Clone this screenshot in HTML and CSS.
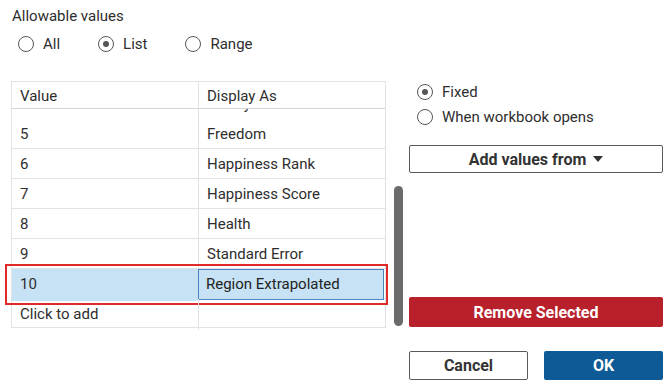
FILE: index.html
```html
<!DOCTYPE html>
<html>
<head>
    <title>Allowable values</title>
    <link rel="stylesheet" href="styles.css">
</head>
<body>
    <div class="dialog">
        <div class="section-title">Allowable values</div>

        <div class="radio-row">
            <div class="radio"><span class="circle"></span>All</div>
            <div class="radio checked"><span class="circle"></span>List</div>
            <div class="radio"><span class="circle"></span>Range</div>
        </div>

        <div class="main">
            <div class="list-panel">
                <div class="table">
                    <div class="row head">
                        <div class="cell">Value</div>
                        <div class="cell">Display As</div>
                    </div>
                    <!-- list is scrolled: only the bottom of the "Family" row shows -->
                    <div class="clip">
                        <div class="row cut">
                            <div class="cell"></div>
                            <div class="cell">Family</div>
                        </div>
                    </div>
                    <div class="row"><div class="cell">5</div><div class="cell">Freedom</div></div>
                    <div class="row"><div class="cell">6</div><div class="cell">Happiness Rank</div></div>
                    <div class="row"><div class="cell">7</div><div class="cell">Happiness Score</div></div>
                    <div class="row"><div class="cell">8</div><div class="cell">Health</div></div>
                    <div class="row"><div class="cell">9</div><div class="cell">Standard Error</div></div>
                    <div class="row selected">
                        <div class="cell">10</div>
                        <div class="cell editing">Region Extrapolated</div>
                    </div>
                    <div class="row add"><div class="cell">Click to add</div><div class="cell"></div></div>
                </div>
                <div class="scrollbar"></div>
            </div>

            <div class="side">
                <div class="radio checked small"><span class="circle"></span>Fixed</div>
                <div class="radio small"><span class="circle"></span>When workbook opens</div>

                <div class="btn outline add-values">
                    Add values from
                    <svg width="10" height="6" viewBox="0 0 10 6"><path d="M0 0 L10 0 L5 6 Z" fill="#333"/></svg>
                </div>

                <div class="btn danger remove">Remove Selected</div>

                <div class="footer">
                    <div class="btn outline">Cancel</div>
                    <div class="btn primary">OK</div>
                </div>
            </div>
        </div>
    </div>
</body>
</html>
```

FILE: styles.css
```css
body {
    margin: 0;
    background-color: white;
    font-family: Roboto, "Liberation Sans", sans-serif;
    font-size: 15px;
    color: #2e2e2e;
}
.dialog {
    width: 669px;
    height: 387px;
    padding: 6px 0 0 12px;
    box-sizing: border-box;
}
.section-title {
    line-height: 20px;
}
.radio-row {
    display: flex;
    margin: 8px 0 0 6px;
}
.radio {
    display: flex;
    align-items: center;
    line-height: 20px;
    margin-right: 38px;
}
.circle {
    width: 16px;
    height: 16px;
    box-sizing: border-box;
    border: 1.5px solid #555;
    border-radius: 50%;
    margin-right: 9px;
    position: relative;
}
.radio.checked .circle::after {
    content: "";
    position: absolute;
    left: 3.5px;
    top: 3.5px;
    width: 6px;
    height: 6px;
    border-radius: 50%;
    background-color: #555;
}
.main {
    display: flex;
    align-items: flex-start;
    margin-top: 27px;
}
.list-panel {
    display: flex;
    align-items: flex-end;
}
.table {
    width: 375px;
    margin-left: -1px;
    border: 1px solid #e2e2e2;
    box-sizing: border-box;
}
.row {
    display: grid;
    grid-template-columns: 186px 1fr;
    height: 30px;
    border-bottom: 1px solid #e2e2e2;
    box-sizing: border-box;
    position: relative;
}
.row:last-child {
    border-bottom: none;
    height: 28px;
}
.cell {
    padding-left: 8px;
    line-height: 31px;
    white-space: nowrap;
}
.cell + .cell {
    border-left: 1px solid #e2e2e2;
}
.row.head {
    height: 27px;
    border-bottom: 1px solid #d4d4d4;
}
.row.head .cell {
    line-height: 28px;
}
.clip {
    height: 10px;
    overflow: hidden;
}
.row.cut {
    margin-top: -20px;
}
.row.selected .cell:first-child {
    background-color: #c7e2f4;
}
.row.selected .cell.editing {
    background-color: #c7e2f4;
    border: 1px solid #4a82c4;
    line-height: 29px;
    margin: 0 1px 1px 0;
    padding-left: 7px;
    color: #222;
}
.row.selected::after {
    content: "";
    position: absolute;
    left: -7px;
    right: -3px;
    top: -5px;
    bottom: -7px;
    border: 2px solid #e02a2a;
}
.scrollbar {
    width: 9px;
    height: 140px;
    margin: 0 0 2px 8px;
    border-radius: 5px;
    background-color: #6b6b6b;
}
.side {
    width: 254px;
    margin-left: 6px;
    display: flex;
    flex-direction: column;
}
.radio.small {
    margin: 1px 0 0 8px;
}
.radio.small + .radio.small {
    margin-top: 5px;
}
.btn {
    display: flex;
    align-items: center;
    justify-content: center;
    gap: 7px;
    height: 29px;
    box-sizing: border-box;
    border-radius: 2px;
    font-size: 16px;
    font-weight: 700;
}
.btn.outline {
    border: 1px solid #5a5a5a;
    color: #333;
}
.add-values {
    margin-top: 18px;
    height: 28px;
}
.btn.danger {
    margin-top: 124px;
    height: 30px;
    background-color: #b8202b;
    color: white;
}
.btn.primary {
    background-color: #0e5a96;
    color: white;
}
.footer {
    display: grid;
    grid-template-columns: 1fr 1fr;
    gap: 16px;
    margin-top: 24px;
}
```
